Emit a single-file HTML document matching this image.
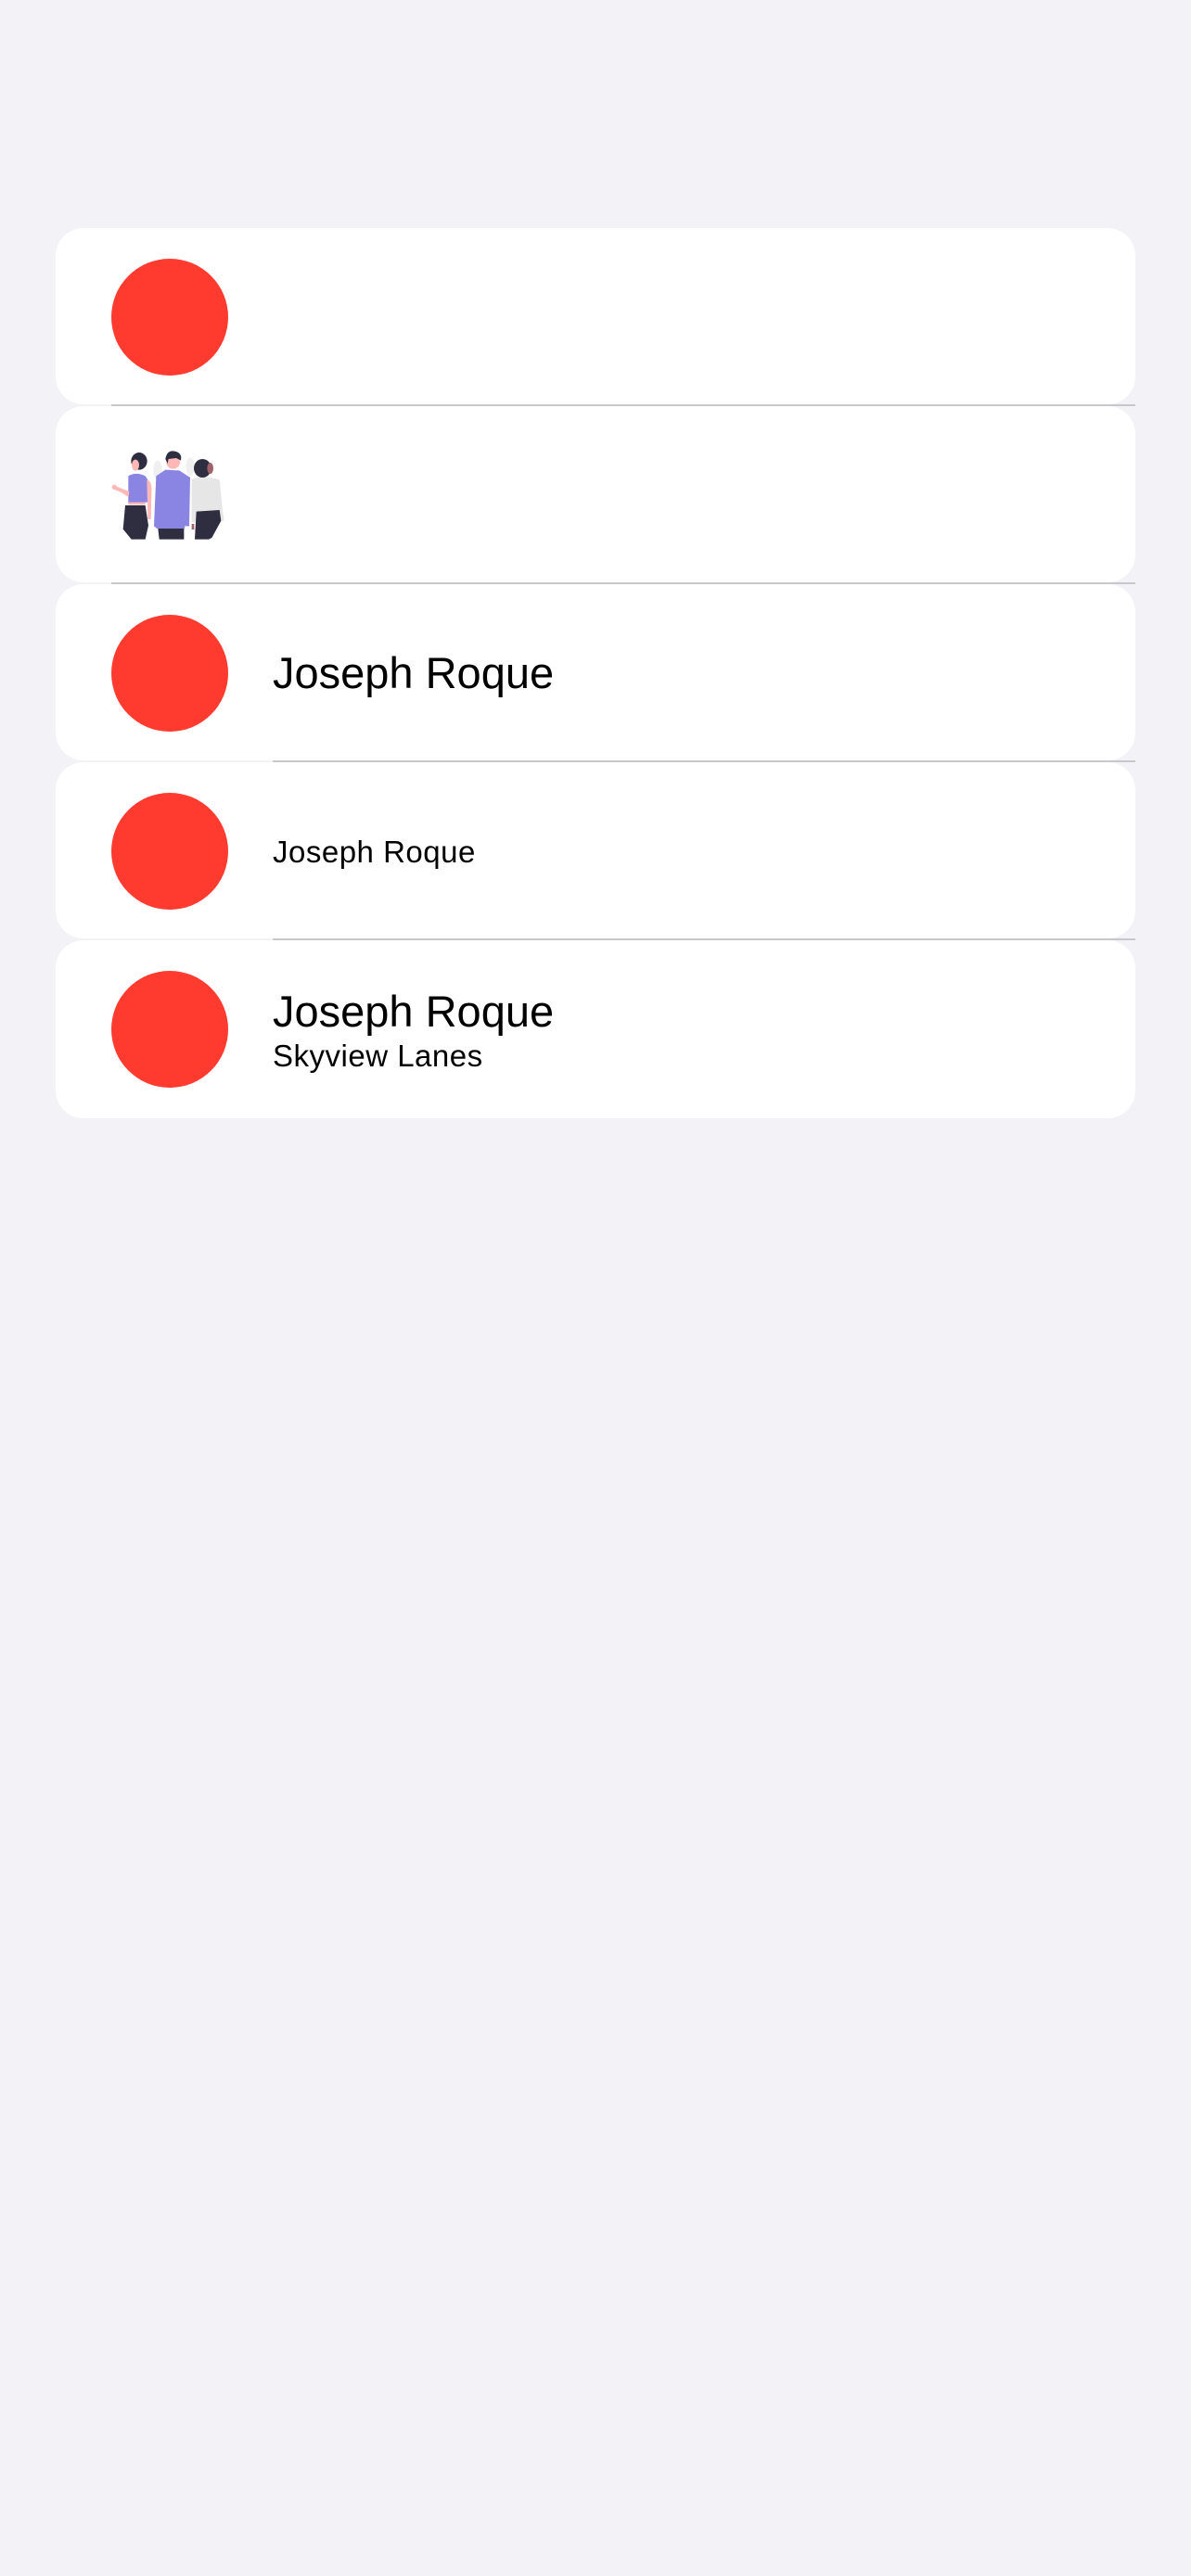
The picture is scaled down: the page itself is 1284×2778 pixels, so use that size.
<!DOCTYPE html>
<html><head><meta charset="utf-8">
<style>
html,body{margin:0;padding:0;}
body{width:1284px;height:2778px;background:#f2f2f7;position:relative;font-family:"Liberation Sans",sans-serif;color:#000;overflow:hidden;}
.card{position:absolute;left:60px;width:1164px;height:190px;background:#fff;border-radius:30px;}
.sep{position:absolute;right:60px;height:2px;background:#c8c8cc;}
.dot{position:absolute;left:120px;width:126px;height:126px;border-radius:50%;background:#ff3b30;}
.t{position:absolute;left:294px;white-space:nowrap;line-height:1;}
.big{font-size:47px;}
.small{font-size:33px;letter-spacing:0.5px;}
</style></head><body>
<div class="card" style="top:246px"></div>
<div class="card" style="top:438px"></div>
<div class="card" style="top:630px"></div>
<div class="card" style="top:822px"></div>
<div class="card" style="top:1014px;height:192px"></div>

<div class="sep" style="top:436px;left:120px"></div>
<div class="sep" style="top:628px;left:120px"></div>
<div class="sep" style="top:820px;left:294px"></div>
<div class="sep" style="top:1012px;left:294px"></div>

<div class="dot" style="top:279px"></div>
<div class="dot" style="top:663px"></div>
<div class="dot" style="top:855px"></div>
<div class="dot" style="top:1047px"></div>

<svg style="position:absolute;left:110px;top:480px" width="150" height="110" viewBox="0 0 450 330">
  <ellipse cx="180" cy="80" rx="14" ry="30" fill="#f0f0f0"/>
  <ellipse cx="285" cy="70" rx="14" ry="30" fill="#f0f0f0"/>
  <path d="M75 195 L140 195 L150 260 L140 305 L95 305 L68 272 Z" fill="#2f2e41"/>
  <path d="M85 100 Q110 85 140 100 L150 115 L150 185 L85 187 Z" fill="#8a84e2"/>
  <rect x="85" y="185" width="55" height="8" fill="#ffb8b8"/>
  <path d="M145 112 Q162 115 160 150 L158 240 L148 240 L146 150 Z" fill="#ffb8b8"/>
  <path d="M88 150 L62 140 L38 130 L36 142 L60 152 L86 168 Z" fill="#ffb8b8"/>
  <circle cx="40" cy="136" r="8" fill="#ffb8b8"/>
  <ellipse cx="120" cy="52" rx="26" ry="28" fill="#2f2e41"/>
  <ellipse cx="108" cy="65" rx="12" ry="18" fill="#ffb8b8"/>
  <path d="M180 260 L265 260 L265 305 L185 305 Z" fill="#2f2e41"/>
  <path d="M175 100 L205 80 L250 82 L285 105 L282 262 L268 262 L267 270 L178 270 L168 262 Z" fill="#8a84e2"/>
  <circle cx="230" cy="55" r="22" fill="#ffb8b8"/>
  <path d="M205 45 Q210 15 235 20 Q260 25 255 50 L240 42 L215 45 L212 60 Z" fill="#2f2e41"/>
  <path d="M290 110 Q330 95 380 112 L390 210 L395 245 L290 250 Z" fill="#e6e6e6"/>
  <path d="M305 215 L380 210 L385 245 L355 300 L345 305 L300 305 Z" fill="#2f2e41"/>
  <ellipse cx="325" cy="75" rx="28" ry="30" fill="#2f2e41"/>
  <ellipse cx="350" cy="75" rx="10" ry="18" fill="#a0616a"/>
  <rect x="290" y="255" width="8" height="18" fill="#a0616a"/>
</svg>

<div class="t big" style="top:702px">Joseph Roque</div>
<div class="t small" style="top:902px">Joseph Roque</div>
<div class="t big" style="top:1067px">Joseph Roque</div>
<div class="t small" style="top:1122px">Skyview Lanes</div>
</body></html>
